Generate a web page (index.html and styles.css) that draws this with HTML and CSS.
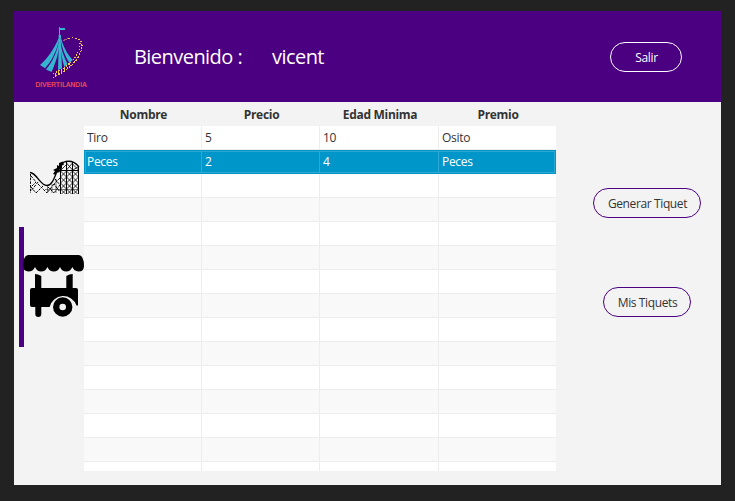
FILE: index.html
```html
<!DOCTYPE html>
<html lang="es">
<head>
<meta charset="utf-8">
<title>Divertilandia</title>
<link rel="stylesheet" href="styles.css">
</head>
<body>
<div class="window">
  <header class="header">
    <svg class="logo" viewBox="0 0 54 64" width="54" height="64">
      <g fill="#35b5d0">
        <path d="M25 1h1v8h-1zM26 2h5v2h-5z"/>
        <path d="M24.600 9h2.400v3h-2.400z"/>
        <path d="M24.600 12C21 22 13 33 6 39l5 3.200C18 35 23 24 25.400 13z"/>
        <path d="M24.800 16C23 26 18 37 12 43.500l5.500 2.500C22 37 25 25 25.500 17z"/>
        <path d="M25 11L24 44l4-1.500L26.700 11z"/>
        <path d="M26.200 18C27 26 28 33 30.300 41l3.200-3C30 31 27.500 24 26.700 18z"/>
        <path d="M26.200 11C27.500 21 31 30 35.500 37l3.200-3C33 28 28.500 19 26.900 11z"/>
      </g>
      <g fill="none" stroke="#f8c84a" stroke-width="1.100" shape-rendering="crispEdges">
        <path stroke="#a65a80" d="M29 14.500L34 12.700"/>
        <path stroke-dasharray="2 1.300" d="M34 12.500C44 10.500 48.500 14 48 21C47 30 38 43 19 51.500"/>
        <path stroke-dasharray="1.500 1.500" d="M46 17C47 25 38 41 18.500 47.500"/>
        <path stroke-dasharray="1 2.500" stroke-width="3" d="M36 38C31 43 26 47 19 49.500"/>
      </g>
      <text class="logo-text" x="1.500" y="61" textLength="51">DIVERTILANDIA</text>
    </svg>
    <p class="welcome">Bienvenido :</p>
    <p class="user">vicent</p>
    <button class="btn btn-exit">Salir</button>
  </header>
  <main class="content">
    <nav class="sidebar">
      <a class="nav-item coaster">
        <svg viewBox="0 0 51 34" width="51" height="34">
          <g fill="none" stroke="#000">
            <path stroke-width="1.300" d="M1 12.500C8 13 11 25.500 18 25.500C26 25.500 27 6 34 2.500C40 0 46 2 50 7"/>
            <path stroke-width=".5" d="M18.500 26v7M23 24v9M27 19v14M16 29.500h34"/>
            <path stroke-width="1" d="M31.500 8v26M37.500 2v32M43.500 2v32M49.500 6v28M30 10.500h20"/>
            <path stroke-width=".8" d="M31.500 11l6 6-6 6 6 6-5 5M37.500 11l-6 6 6 6-6 6 5 5M37.500 11l6 6-6 6 6 6-5 5M43.500 11l-6 6 6 6-6 6 5 5M43.500 11l6 6-6 6 6 6-5 5M49.500 11l-6 6 6 6-6 6 5 5M37.500 3l6 7M43.500 3l-6 7M43.500 4l6 6M49 7l-5 3M37 5l-5 5"/>
            <path stroke-width="1" stroke-dasharray="2.500 1.200" d="M1.500 14v19M2 16l5 6-5 5 5 6M9 22l-7 9M9 24l9 9M14 26l-7 7M19 27l6 6M25 24l-7 9M26 19l5 6-6 8M31 18l-6 6 6 8"/>
          </g>
          <path d="M30 3l4-1.500 1 3-2 1v3l-3 1.500 1 2-4 1v2l-3-1 2-3-2-1 4-2v-3l2 1z"/>
        </svg>
      </a>
      <a class="nav-item cart active">
        <svg viewBox="0 0 61 64" width="61" height="64">
          <path d="M5 1H56Q61 2 61 12Q61 17.500 55.500 17.500Q51 17 49.300 13Q47.500 17.500 43.200 17.500Q39 17.500 37 13Q35 17.500 30.800 17.500Q26.500 17.500 24.400 13Q22.500 17.500 18.200 17.500Q14 17.500 12 13Q10 17.500 5.500 17.500Q0 17 0 12Q0 2 5 1z"/>
          <path d="M12 20q3 0 6.300 2v12h25V22q3-2 6.400-2v14H53q2 0 2 2v15.500h-1.500A14 14 0 0 0 26.600 53H18.300v7a3 3 0 0 1-6 0v-7H9q-2 0-2-2V36q0-2 2-2h3z"/>
          <path fill-rule="evenodd" d="M39.700 43.300a9.700 9.700 0 1 1 0 19.400a9.700 9.700 0 1 1 0-19.400zm0 6.400a3.300 3.300 0 1 0 0 6.600a3.300 3.300 0 1 0 0-6.600z"/>
        </svg>
      </a>
    </nav>
    <section class="table">
      <div class="row head"><span>Nombre</span><span>Precio</span><span>Edad Minima</span><span>Premio</span></div>
      <div class="rows">
        <div class="row"><span>Tiro</span><span>5</span><span>10</span><span>Osito</span></div>
        <div class="row selected"><span>Peces</span><span>2</span><span>4</span><span>Peces</span></div>
        <div class="row"><span></span><span></span><span></span><span></span></div>
        <div class="row"><span></span><span></span><span></span><span></span></div>
        <div class="row"><span></span><span></span><span></span><span></span></div>
        <div class="row"><span></span><span></span><span></span><span></span></div>
        <div class="row"><span></span><span></span><span></span><span></span></div>
        <div class="row"><span></span><span></span><span></span><span></span></div>
        <div class="row"><span></span><span></span><span></span><span></span></div>
        <div class="row"><span></span><span></span><span></span><span></span></div>
        <div class="row"><span></span><span></span><span></span><span></span></div>
        <div class="row"><span></span><span></span><span></span><span></span></div>
        <div class="row"><span></span><span></span><span></span><span></span></div>
        <div class="row"><span></span><span></span><span></span><span></span></div>
        <div class="row"><span></span><span></span><span></span><span></span></div>
      </div>
    </section>
    <aside class="actions">
      <button class="btn btn-generate">Generar Tiquet</button>
      <button class="btn btn-mine">Mis Tiquets</button>
    </aside>
  </main>
</div>
</body>
</html>
```
FILE: styles.css
```css
* { box-sizing: border-box; }
body {
  margin: 0;
  height: 501px;
  padding: 11px 14px 16px;
  overflow: hidden;
  background: #222;
  color: #333;
  font: 12px/16px "Open Sans", "Noto Sans", sans-serif;
  letter-spacing: -0.3px;
}
.window { height: 474px; background: #f3f3f3; }
.header {
  display: flex;
  align-items: center;
  height: 91px;
  padding: 0 39px 0 20px;
  background: #4b0082;
  color: #fff;
}
.logo { flex: none; margin-top: 3px; }
.logo-text {
  font: 6.4px "Liberation Sans", sans-serif;
  letter-spacing: 0;
  fill: #ff5650;
  stroke: #ff5650;
  stroke-width: 0.2px;
}
.welcome, .user {
  margin: 0;
  font-size: 20px;
  line-height: 26px;
  letter-spacing: -0.55px;
  white-space: nowrap;
}
.welcome { width: 138px; margin-left: 46px; }
.btn {
  height: 30px;
  padding: 1px 0 0 1px;
  border: 1px solid #4b0082;
  border-radius: 15px;
  background: transparent;
  color: #333;
  font: inherit;
  letter-spacing: -0.38px;
}
.btn-exit { width: 72px; margin-left: auto; padding-top: 2px; border-color: #fff; color: #fff; }
.content { display: grid; grid-template-columns: 70px 472px 1fr; height: 383px; }
.sidebar { display: flex; flex-direction: column; padding: 5px 0 0 5px; }
.nav-item { display: flex; align-items: center; height: 120px; }
.nav-item svg { flex: none; }
.coaster { align-items: flex-start; padding: 53px 0 0 10px; }
.active { border-left: 5px solid #4b0082; }
.cart svg { margin: -3px 0 0 -1px; }
.table { height: 369px; overflow: hidden; }
.rows { height: 345px; overflow: hidden; }
.row {
  display: grid;
  grid-template-columns: 118px 118px 119px 117px;
  height: 24px;
  background: #fff;
}
.row:nth-child(even) { background: #f9f9f9; }
.row span {
  padding: 4px 3px 0;
  border-right: 1px solid #ededed;
  border-bottom: 1px solid #ededed;
}
.row span:last-child { border-right: 0; }
.row.head { background: #f3f3f3; font-weight: 700; text-align: center; }
.row.head span { border: 0; padding: 5px 0 0 1px; }
.row.selected {
  background: #0096c9;
  color: #fff;
  border: 1px solid #0093c5;
  box-shadow: inset 0 0 0 1px #2ba8d3;
  grid-template-columns: 117px 118px 119px 116px;
}
.row.selected span { border-bottom: 0; border-right-color: #2ba8d3; padding: 3px 3px 0 2px; }
.row.selected span + span { padding-left: 3px; }
.actions {
  display: flex;
  flex-direction: column;
  align-items: center;
  gap: 69px;
  padding: 86px 0 0 17px;
}
.btn-generate { width: 108px; }
.btn-mine { width: 88px; }
```
